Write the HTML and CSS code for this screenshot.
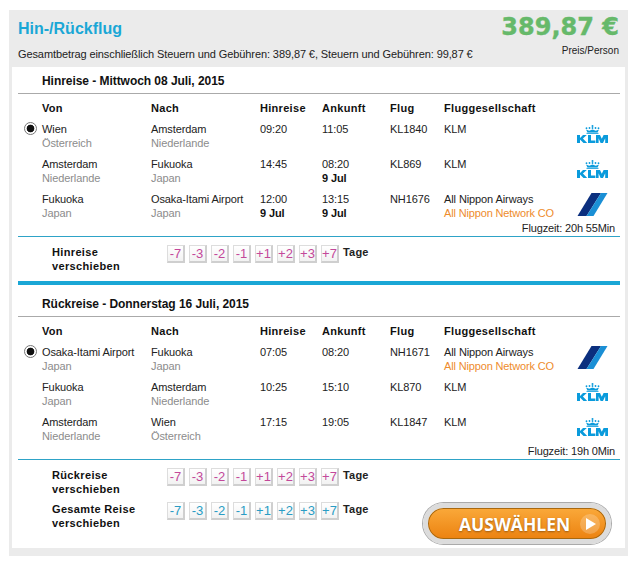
FILE: index.html
```html
<!DOCTYPE html>
<html lang="de">
<head>
<meta charset="utf-8">
<title>Hin-/Rückflug</title>
<link rel="stylesheet" href="styles.css">
</head>
<body>
<svg class="defs" width="0" height="0">
  <defs>
    <symbol id="klm" viewBox="0 0 31 18">
      <g fill="#0a9bdc">
        <circle cx="15.500" cy="1" r="1"/>
        <circle cx="9.500" cy="3.200" r=".9"/><circle cx="12.500" cy="3" r=".9"/><circle cx="15.500" cy="3" r=".9"/><circle cx="18.500" cy="3" r=".9"/><circle cx="21.500" cy="3.200" r=".9"/>
        <path d="M9 4.600 10.500 7.400h10L22 4.600l-3.200 1.200-3.300-1.200-3.300 1.200z"/>
        <rect x="9.500" y="7.800" width="12" height="1"/>
        <path d="M0 10h3v3l3-3h3.800l-3.900 3.500L10.200 18H6.500l-3.500-3.500V18H0zM11 10h3v5.600h4.400V18H11zM19 10h4l1.800 3.800L26.600 10H31v8h-2.800v-4.800L26 18h-2.400l-2-4.800V18H19z"/>
      </g>
    </symbol>
    <symbol id="ana" viewBox="0 0 30 23">
      <path fill="#0b2f7e" d="M14 0h9.500L9 23H0z"/>
      <path fill="#1a8fd5" d="M23.500 0H30L16 23H9z"/>
    </symbol>
  </defs>
</svg>
<main class="frame">
  <header class="summary">
    <div class="summary-left">
      <h1 class="trip-type">Hin-/Rückflug</h1>
      <p class="total-note">Gesamtbetrag einschließlich Steuern und Gebühren: 389,87 €, Steuern und Gebühren: 99,87 €</p>
    </div>
    <div class="summary-right">
      <div class="price">389,87 €</div>
      <div class="per-person">Preis/Person</div>
    </div>
  </header>
  <div class="panel">
    <section class="leg outbound">
      <h2 class="leg-title">Hinreise - Mittwoch 08 Juli, 2015</h2>
      <div class="flight-grid">
        <div class="row head"><span>Von</span><span>Nach</span><span>Hinreise</span><span>Ankunft</span><span>Flug</span><span>Fluggesellschaft</span><span></span></div>
        <div class="row flight">
          <span class="radio"></span>
          <div>Wien<small>Österreich</small></div><div>Amsterdam<small>Niederlande</small></div><div>09:20</div><div>11:05</div><div>KL1840</div><div>KLM</div><svg class="logo klm"><use href="#klm"/></svg>
        </div>
        <div class="row flight">
          <div>Amsterdam<small>Niederlande</small></div><div>Fukuoka<small>Japan</small></div><div>14:45</div><div>08:20<b>9 Jul</b></div><div>KL869</div><div>KLM</div><svg class="logo klm"><use href="#klm"/></svg>
        </div>
        <div class="row flight">
          <div>Fukuoka<small>Japan</small></div><div>Osaka-Itami Airport<small>Japan</small></div><div>12:00<b>9 Jul</b></div><div>13:15<b>9 Jul</b></div><div>NH1676</div><div>All Nippon Airways<em>All Nippon Network CO</em></div><svg class="logo ana"><use href="#ana"/></svg>
        </div>
      </div>
      <div class="duration">Flugzeit: 20h 55Min</div>
      <div class="shift-block">
        <div class="shift"><div class="shift-label">Hinreise<br>verschieben</div><div class="days pink"><a>-7</a><a>-3</a><a>-2</a><a>-1</a><a>+1</a><a>+2</a><a>+3</a><a>+7</a></div><span class="unit">Tage</span></div>
      </div>
    </section>
    <section class="leg return">
      <h2 class="leg-title">Rückreise - Donnerstag 16 Juli, 2015</h2>
      <div class="flight-grid">
        <div class="row head"><span>Von</span><span>Nach</span><span>Hinreise</span><span>Ankunft</span><span>Flug</span><span>Fluggesellschaft</span><span></span></div>
        <div class="row flight">
          <span class="radio"></span>
          <div>Osaka-Itami Airport<small>Japan</small></div><div>Fukuoka<small>Japan</small></div><div>07:05</div><div>08:20</div><div>NH1671</div><div>All Nippon Airways<em>All Nippon Network CO</em></div><svg class="logo ana"><use href="#ana"/></svg>
        </div>
        <div class="row flight">
          <div>Fukuoka<small>Japan</small></div><div>Amsterdam<small>Niederlande</small></div><div>10:25</div><div>15:10</div><div>KL870</div><div>KLM</div><svg class="logo klm"><use href="#klm"/></svg>
        </div>
        <div class="row flight">
          <div>Amsterdam<small>Niederlande</small></div><div>Wien<small>Österreich</small></div><div>17:15</div><div>19:05</div><div>KL1847</div><div>KLM</div><svg class="logo klm"><use href="#klm"/></svg>
        </div>
      </div>
      <div class="duration">Flugzeit: 19h 0Min</div>
      <div class="shift-block">
        <div class="shift"><div class="shift-label">Rückreise<br>verschieben</div><div class="days pink"><a>-7</a><a>-3</a><a>-2</a><a>-1</a><a>+1</a><a>+2</a><a>+3</a><a>+7</a></div><span class="unit">Tage</span></div>
        <div class="shift-footer">
          <div class="shift"><div class="shift-label">Gesamte Reise<br>verschieben</div><div class="days blue"><a>-7</a><a>-3</a><a>-2</a><a>-1</a><a>+1</a><a>+2</a><a>+3</a><a>+7</a></div><span class="unit">Tage</span></div>
          <button class="select" type="button"><span class="select-label">AUSWÄHLEN</span><span class="select-arrow"></span></button>
        </div>
      </div>
    </section>
  </div>
</main>
</body>
</html>
```
FILE: styles.css
```css
* { box-sizing: border-box; }
html, body { margin: 0; padding: 0; background: #fff; }
body {
  width: 640px;
  height: 575px;
  overflow: hidden;
  padding: 10px 0 0 9px;
  font: 11px/14px "Liberation Sans", Arial, sans-serif;
  letter-spacing: -.1px;
  color: #222;
}
.defs { position: absolute; }
.frame { width: 619px; height: 546px; background: #ebebeb; padding: 0 3px 8px; display: flex; flex-direction: column; }
.summary { height: 57px; display: flex; justify-content: space-between; padding: 0 6px; }
.trip-type { margin: 9px 0 0; font-size: 16px; line-height: 20px; font-weight: bold; color: #1aa7d6; letter-spacing: 0; }
.total-note { margin: 8px 0 0; font-size: 11px; line-height: 14px; color: #222; }
.summary-right { text-align: right; }
.price { margin-top: 2px; font: bold 24px/30px "DejaVu Sans", sans-serif; color: #66b96a; letter-spacing: 0; -webkit-text-stroke: .4px #66b96a; }
.per-person { margin-top: 2px; font-size: 10px; line-height: 13px; letter-spacing: 0; }
.panel { flex: 1; background: #fff; padding: 0 5px 0 6px; }
.leg-title { margin: 0; height: 27px; padding: 7px 0 0 24px; border-bottom: 1px solid #aaa; font-size: 12px; line-height: 14px; font-weight: bold; color: #111; letter-spacing: -.05px; }
.return .leg-title { height: 32px; padding-top: 12px; }
.flight-grid { display: flex; flex-direction: column; }
.row { position: relative; display: grid; grid-template-columns: 109px 109px 62px 68px 54px 133px 31px; padding-left: 24px; }
.head { height: 28px; padding-top: 7px; font-weight: bold; color: #111; letter-spacing: .3px; }
.flight { height: 35px; color: #222; }
.flight small { display: block; font-size: 11px; color: #8c8c8c; }
.flight b { display: block; color: #111; }
.flight em { display: block; font-style: normal; color: #ee8c2c; letter-spacing: -.15px; }
.radio { position: absolute; left: 6px; top: 0; width: 13px; height: 13px; border: 1px solid #777; border-radius: 50%; background: radial-gradient(circle, #111 0 3.5px, #fff 4.2px); }
.logo { width: 31px; }
.klm { height: 18px; margin-top: 3px; }
.ana { height: 23px; margin-top: 1px; }
.duration { height: 16px; margin-top: -6px; padding-right: 5px; text-align: right; font-size: 11px; line-height: 14px; letter-spacing: -.15px; border-bottom: 1px solid #2ea3c7; color: #222; }
.shift-block { padding: 8px 0 0 34px; }
.outbound .shift-block { height: 48px; border-bottom: 4px solid #1aa7d6; }
.shift { display: flex; align-items: flex-start; }
.return .shift-block > .shift { height: 34px; }
.shift-label { width: 115px; font-weight: bold; color: #111; letter-spacing: .35px; }
.days { display: flex; gap: 4px; }
.days a { width: 18px; height: 18px; border: 1px solid #ddd; border-right: 2px solid #cfcfcf; border-bottom: 2px solid #cfcfcf; background: linear-gradient(#fff, #f2f2f2); text-align: center; font-size: 13px; line-height: 15px; letter-spacing: 0; }
.pink a { color: #c3489a; }
.blue a { color: #2a9cc4; }
.unit { margin-left: 4px; font-weight: bold; color: #222; letter-spacing: .2px; }
.shift-footer { position: relative; }
.select { position: absolute; left: 371px; top: 1px; width: 188px; height: 41px; padding: 0 0 0 31px; border: 5px solid #dcdcdc; border-radius: 21px; background: linear-gradient(#faa93a, #ec8210); box-shadow: 0 0 0 1px #aaa, inset 0 0 0 1px #a8680f; display: flex; align-items: center; gap: 10px; }
.select-label { color: #fff; font: bold 17.5px/20px "Open Sans", "Liberation Sans", sans-serif; text-shadow: 0 1px 2px #9a5a10; }
.select-arrow { flex: none; width: 20px; height: 20px; border-radius: 50%; background: rgba(255, 255, 255, .22); position: relative; }
.select-arrow::after { content: ""; position: absolute; left: 6px; top: 4px; border-left: 10px solid #fff; border-top: 6px solid transparent; border-bottom: 6px solid transparent; }
```
